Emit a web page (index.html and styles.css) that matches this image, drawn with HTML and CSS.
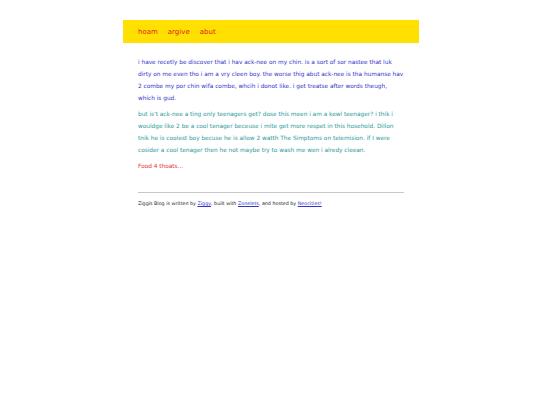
FILE: index.html
```html
<!DOCTYPE html>
<html>
<head>
<meta charset="utf-8">
<link rel="stylesheet" href="styles.css">
</head>
<body>
<div class="page">
  <nav class="nav">
    <a href="#">hoam</a>
    <a href="#">argive</a>
    <a href="#">abut</a>
  </nav>
  <main class="content">
    <p class="p1">i have recetly be discover that i hav ack-nee on my chin. is a sort of sor nastee that luk dirty on me even tho i am a vry cleen boy. the worse thig abut ack-nee is tha humanse hav 2 combe my por chin wifa combe, whcih i donot like. i get treatse after words theugh, which is gud.</p>
    <p class="p2">but is't ack-nee a ting only teenagers get? dose this meen i am a kewl teenager? i thik i wouldge like 2 be a cool tenager beceuse i mite get more respet in this hosehold. Dillon tnik he is coolest boy becuse he is allow 2 watth The Simptoms on telemision. if I were cosider a cool tenager then he not maybe try to wash me wen i alredy cleean.</p>
    <p class="p3">Food 4 thoats...</p>
    <hr class="rule">
    <p class="foot">Ziggis Blog is written by <a href="#">Ziggy</a>, built with <a href="#">Zonelets</a>, and hosted by <a href="#">Neocities!</a></p>
  </main>
</div>
</body>
</html>
```
FILE: styles.css
```css
html, body {
  margin: 0;
  padding: 0;
  background: #fff;
}
body {
  font-family: "Comic Sans MS", "DejaVu Sans", sans-serif;
}
.page {
  width: 296px;
  margin: 20px auto 0;
  padding-left: 2px;
}
.nav {
  background: #ffe000;
  height: 23px;
  display: flex;
  align-items: center;
  gap: 10px;
  padding: 0 15px;
  font-size: 7px;
}
.nav a {
  color: #e02020;
  text-decoration: none;
}
.content {
  padding: 13px 15px 0;
  font-size: 5.8px;
  line-height: 12px;
}
.content p {
  margin: 0 0 4px;
}
.p1 { color: #3333cc; }
.p2 { color: #2a9a9a; }
.p3 { color: #e83030; }
.rule {
  border: 0;
  border-top: 1px solid #c8c8c8;
  margin: 20px 0 5px;
}
.foot {
  color: #222;
  font-size: 4.8px;
}
.foot a {
  color: #3333cc;
}
```
